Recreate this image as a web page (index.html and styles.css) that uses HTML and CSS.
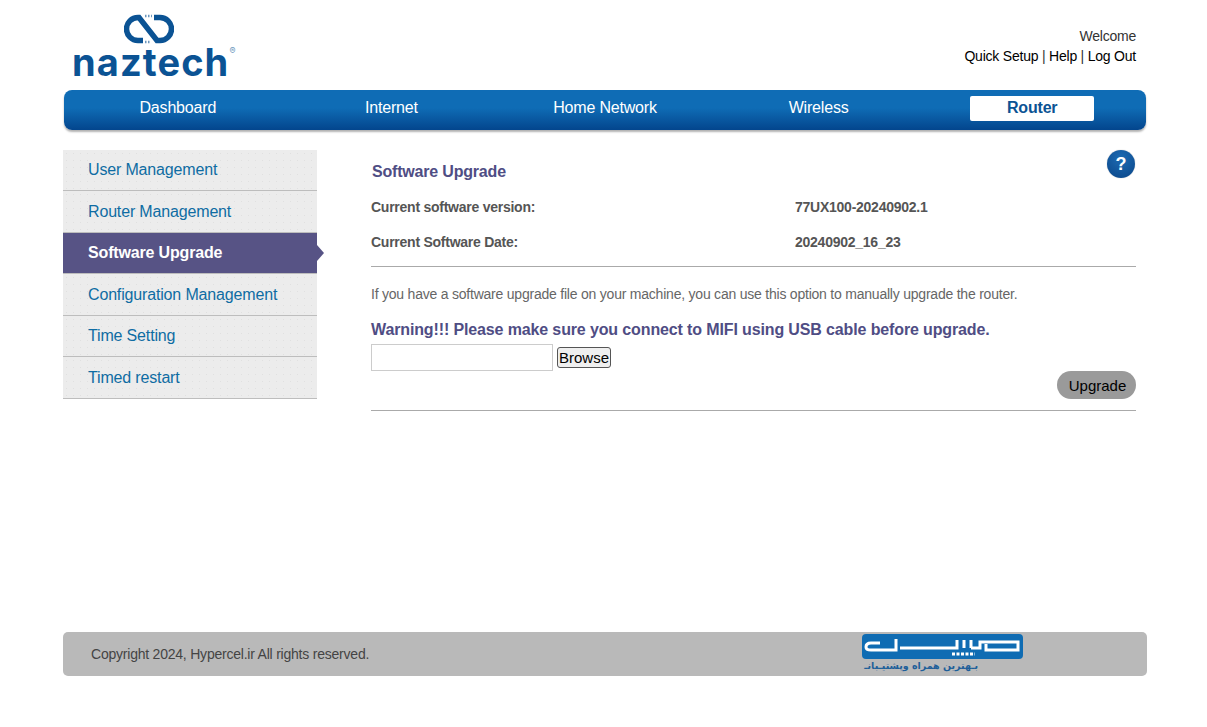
FILE: index.html
```html
<!DOCTYPE html>
<html lang="en">
<head>
<meta charset="utf-8">
<title>Software Upgrade</title>
<link rel="stylesheet" href="styles.css">
</head>
<body>
<div class="page">
  <header class="header">
    <div class="logo">
      <svg class="logo-mark" width="50" height="30" viewBox="0 0 50 30" aria-hidden="true">
        <path d="M19 26.500 H14 A11.500 11.500 0 1 1 14 3.500 H15 L33 26.500 H36 A11.500 11.500 0 0 0 36 3.500 H30" fill="none" stroke="#0b5394" stroke-width="5.500"/>
        <path d="M21 2 H28 M21 28 H27" stroke="#6c97bd" stroke-width="2.500" stroke-dasharray="1.500 1.500"/>
      </svg>
      <div class="wordmark">naztech<sup class="reg">®</sup></div>
    </div>
    <div class="top-links">
      <div class="welcome">Welcome</div>
      <div class="links"><a>Quick Setup</a> | <a>Help</a> | <a>Log Out</a></div>
    </div>
  </header>
  <nav class="nav">
    <a class="nav-item">Dashboard</a>
    <a class="nav-item">Internet</a>
    <a class="nav-item">Home Network</a>
    <a class="nav-item">Wireless</a>
    <a class="nav-item active">Router</a>
  </nav>
  <div class="body-row">
    <aside class="side">
      <a class="side-item">User Management</a>
      <a class="side-item">Router Management</a>
      <a class="side-item current">Software Upgrade</a>
      <a class="side-item">Configuration Management</a>
      <a class="side-item">Time Setting</a>
      <a class="side-item">Timed restart</a>
    </aside>
    <main class="main">
      <div class="help">?</div>
      <h1 class="title">Software Upgrade</h1>
      <div class="info-row"><span class="info-label">Current software version:</span><span>77UX100-20240902.1</span></div>
      <div class="info-row"><span class="info-label">Current Software Date:</span><span>20240902_16_23</span></div>
      <hr class="rule first">
      <p class="desc">If you have a software upgrade file on your machine, you can use this option to manually upgrade the router.</p>
      <p class="warning">Warning!!! Please make sure you connect to MIFI using USB cable before upgrade.</p>
      <div class="file-row"><input class="file-input" type="text"><button class="browse" type="button">Browse</button></div>
      <div class="action-row"><button class="upgrade" type="button">Upgrade</button></div>
      <hr class="rule">
    </main>
  </div>
  <footer class="footer">
    <span class="copy">Copyright 2024, Hypercel.ir All rights reserved.</span>
    <div class="partner">
      <svg class="partner-mark" width="161" height="25" viewBox="0 0 161 25" aria-hidden="true">
        <rect width="161" height="25" rx="4" fill="#0f6cb3"/>
        <path d="M18 9 H9 Q4 9 4 13 Q4 16 9 16 H34 V5 M38 14 H95 V6 M102 14 V6 M109 14 V6 M109 14 H118 V8 H156 V16 H124 V10" fill="none" stroke="#fff" stroke-width="3"/>
        <path d="M90 20 H113" stroke="#fff" stroke-width="3" stroke-dasharray="3 1.500"/>
      </svg>
      <div class="partner-text" dir="rtl" lang="fa">بـهترین همراه وپشتیـبانـ</div>
    </div>
  </footer>
</div>
</body>
</html>
```
FILE: styles.css
```css
* { box-sizing: border-box; }
html, body { margin: 0; padding: 0; background: #fff; }
body { font-family: "Liberation Sans", Arial, sans-serif; color: #555; font-size: 14px; letter-spacing: -0.22px; }
.page { width: 1084px; margin-left: 63px; }

.header { height: 90px; display: flex; justify-content: space-between; padding-left: 10px; padding-right: 11px; }
.logo { width: 175px; padding-top: 14px; display: flex; flex-direction: column; }
.logo-mark { margin-left: 51px; display: block; flex: none; }
.wordmark { font-family: "Inter", sans-serif; font-weight: 700; font-size: 38px; line-height: 34px; margin-top: 1px; margin-left: -1px; color: #0b5394; letter-spacing: 1.100px; white-space: nowrap; }
.reg { font-size: 9px; font-weight: 400; line-height: 0; vertical-align: 22px; color: #6c97bd; letter-spacing: 0; }
.top-links { text-align: right; padding-top: 26px; font-size: 14px; line-height: 20px; color: #333; }
.links a { color: #000; }

.nav { margin-left: 1px; width: 1082px; height: 40px; display: grid; grid-template-columns: repeat(5, 1fr); padding: 6px 7px 9px; border-radius: 8px; background: linear-gradient(#0f6cb5 0%, #0f6cb5 45%, #03458d 100%); box-shadow: 0 2px 2px rgba(0,0,0,.3); }
.nav-item { justify-self: center; color: #fff; font-size: 16px; line-height: 23px; height: 25px; width: 124px; text-align: center; letter-spacing: -0.18px; }
.nav-item.active { background: #fff; color: #0b5394; font-weight: 700; border-radius: 2px; }

.body-row { display: flex; padding-top: 20px; height: 502px; }
.side { width: 254px; flex: none; align-self: flex-start; }
.side-item { display: block; height: 41px; line-height: 40px; padding-left: 25px; font-size: 16px; letter-spacing: -0.16px; color: #0f6ca3; border-bottom: 1px solid #bdbdbd; background-color: #ececec; background-image: radial-gradient(#e0e0e0 0.800px, transparent 1px); background-size: 7px 7px; position: relative; }
.side-item:nth-child(even) { height: 42px; line-height: 41px; }
.side-item.current { background: #575385; color: #fff; font-weight: 700; padding-left: 25px; }
.side-item.current::after { content: ""; position: absolute; left: 100%; top: 12px; border-left: 7px solid #575385; border-top: 8px solid transparent; border-bottom: 8px solid transparent; }

.main { position: relative; margin-left: 54px; width: 765px; }
.help { position: absolute; right: 1px; top: 0; width: 28px; height: 28px; border-radius: 50%; background: radial-gradient(circle at 50% 30%, #1d6bb3, #0a4588); box-shadow: 0 0 1px rgba(0,0,0,.4); color: #fff; font-weight: 700; font-size: 18px; line-height: 28px; text-align: center; letter-spacing: 0; }
.title { margin: 12px 0 8px 1px; font-size: 16px; line-height: 19px; color: #4f4d84; font-weight: 700; letter-spacing: -0.19px; }
.info-row { display: flex; font-weight: 700; line-height: 20px; height: 35px; font-size: 14px; padding-top: 8px; letter-spacing: -0.25px; }
.info-label { width: 424px; }
.rule { border: 0; border-top: 1px solid #aaa; margin: 0; }
.rule.first { margin-top: 7px; }
.desc { margin: 19px 0 0; line-height: 16px; font-size: 14px; color: #666; }
.warning { margin: 18px 0 0; font-size: 16px; line-height: 19px; font-weight: 700; color: #4f4d84; letter-spacing: -0.13px; }
.file-row { display: flex; align-items: center; gap: 4px; margin-top: 5px; height: 27px; }
.file-input { width: 182px; height: 27px; border: 1px solid #ccc; background: #fff; padding: 0; }
.browse { height: 21px; width: 54px; padding: 0; font: 15px/19px "Liberation Sans", Arial, sans-serif; color: #000; background: #efefef; border: 1px solid #555; border-radius: 3px; }
.action-row { display: flex; justify-content: flex-end; height: 39px; }
.upgrade { width: 79px; height: 28px; padding: 1px 0 0 2px; border: 0; border-radius: 14px; background: #9a9a9a; color: #000; font: 15px/28px "Liberation Sans", Arial, sans-serif; }

.footer { height: 44px; background: #b9b9b9; border-radius: 5px; display: flex; align-items: center; padding-left: 28px; position: relative; }
.copy { font-size: 14px; color: #444; }
.partner { position: absolute; left: 799px; top: 2px; width: 161px; }
.partner-mark { display: block; }
.partner-text { width: 116px; font-family: "DejaVu Sans", sans-serif; font-size: 9.500px; line-height: 14px; font-weight: 700; color: #1f5f99; white-space: nowrap; letter-spacing: 0; }
```
